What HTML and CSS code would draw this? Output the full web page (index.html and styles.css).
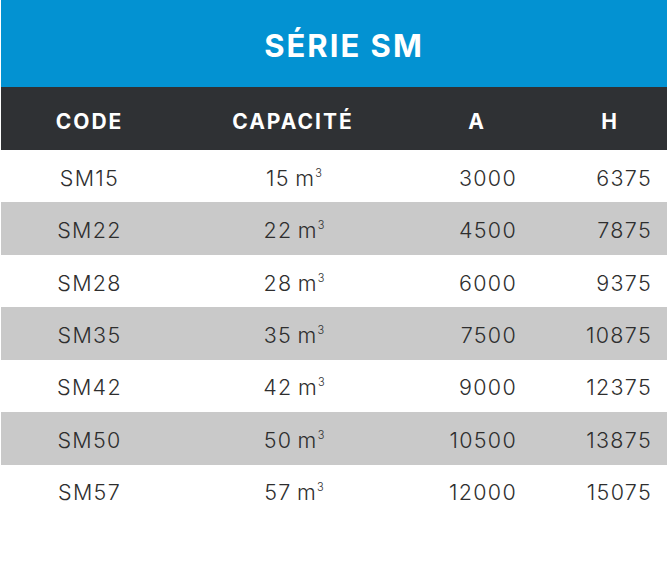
FILE: index.html
```html
<!DOCTYPE html>
<html lang="fr">
<head>
<meta charset="utf-8">
<title>Série SM</title>
<link rel="stylesheet" href="styles.css">
</head>
<body>
<div class="sheet">
  <h1 class="title">SÉRIE SM</h1>
  <div class="table">
    <div class="row head">
      <div class="c code">CODE</div>
      <div class="c cap">CAPACITÉ</div>
      <div class="c a">A</div>
      <div class="c h">H</div>
    </div>
    <div class="row">
      <div class="c code">SM15</div><div class="c cap">15 m<sup>3</sup></div><div class="c a">3000</div><div class="c h">6375</div>
    </div>
    <div class="row alt">
      <div class="c code">SM22</div><div class="c cap">22 m<sup>3</sup></div><div class="c a">4500</div><div class="c h">7875</div>
    </div>
    <div class="row">
      <div class="c code">SM28</div><div class="c cap">28 m<sup>3</sup></div><div class="c a">6000</div><div class="c h">9375</div>
    </div>
    <div class="row alt">
      <div class="c code">SM35</div><div class="c cap">35 m<sup>3</sup></div><div class="c a">7500</div><div class="c h">10875</div>
    </div>
    <div class="row">
      <div class="c code">SM42</div><div class="c cap">42 m<sup>3</sup></div><div class="c a">9000</div><div class="c h">12375</div>
    </div>
    <div class="row alt">
      <div class="c code">SM50</div><div class="c cap">50 m<sup>3</sup></div><div class="c a">10500</div><div class="c h">13875</div>
    </div>
    <div class="row">
      <div class="c code">SM57</div><div class="c cap">57 m<sup>3</sup></div><div class="c a">12000</div><div class="c h">15075</div>
    </div>
  </div>
</div>
</body>
</html>
```
FILE: styles.css
```css
html, body {
  margin: 0;
  padding: 0;
  background: #ffffff;
}
.sheet {
  padding-left: 1px;
  font-family: "Inter", "Liberation Sans", sans-serif;
}
.title {
  margin: 0;
  height: 87px;
  background: #0392d2;
  color: #ffffff;
  font-size: 31px;
  font-weight: 700;
  letter-spacing: 2px;
  display: flex;
  align-items: center;
  justify-content: center;
  padding-top: 4px;
  padding-left: 20px;
  box-sizing: border-box;
}
.table {
  display: flex;
  flex-direction: column;
}
.row {
  display: grid;
  grid-template-columns: 175px 232px 136px 123px;
  height: 52.43px;
  align-items: center;
  color: #2e2e2e;
  font-size: 21.5px;
  font-weight: 300;
  letter-spacing: 1.3px;
  word-spacing: -2px;
  padding-top: 3px;
  box-sizing: border-box;
}
.row.alt {
  background: #c9c9c9;
}
.row.head {
  height: 63px;
  background: #2f3134;
  color: #ffffff;
  font-weight: 700;
  font-size: 21px;
  letter-spacing: 2px;
  word-spacing: 0;
  padding-top: 5px;
}
.c {
  text-align: center;
}
.row .code {
  padding-left: 2px;
}
.row .cap {
  padding-left: 4px;
}
.row .a {
  text-align: right;
  padding-right: 27px;
}
.row .h {
  text-align: right;
  padding-right: 15px;
}
.row.head .cap {
  padding-left: 2px;
}
.row.head .a {
  text-align: center;
  padding-right: 0;
  padding-left: 2px;
}
.row.head .h {
  text-align: center;
  padding-right: 0;
  padding-left: 9px;
}
.row sup {
  font-size: 11px;
  letter-spacing: 0;
  vertical-align: 9px;
  line-height: 0;
  margin-left: 0;
}
```
